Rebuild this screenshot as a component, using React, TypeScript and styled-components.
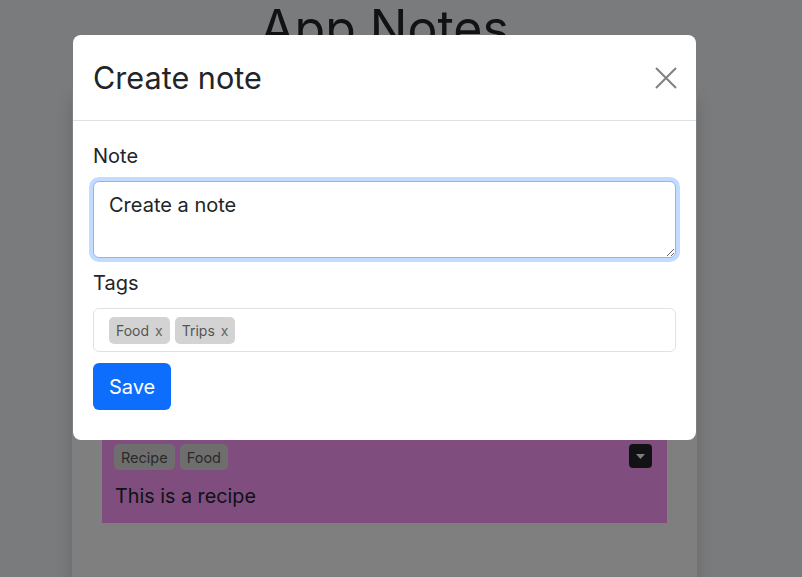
import React from "react";
import styled, { createGlobalStyle } from "styled-components";

const GlobalStyle = createGlobalStyle`
  html, body {
    margin: 0;
    padding: 0;
    background: #f4f6fa;
    font-family: Inter, "Noto Sans", sans-serif;
    color: #212529;
    overflow: hidden;
  }
  * { box-sizing: border-box; }
`;

const Page = styled.div`
  width: 802px;
  height: 577px;
  position: relative;
  overflow: hidden;
`;

const Main = styled.main`
  width: 625px;
  margin-left: 72px;
  display: flex;
  flex-direction: column;
  align-items: stretch;
`;

const AppTitle = styled.h1`
  margin: -2px 0 32px;
  font-size: 50px;
  line-height: 60px;
  font-weight: 400;
  text-align: center;
  color: #212529;
`;

const Panel = styled.section`
  background: #ffffff;
  box-shadow: 0 8px 16px rgba(0, 0, 0, 0.15);
  padding: 342px 30px 60px;
  min-height: 500px;
`;

const NoteCard = styled.article<{ $color: string }>`
  background: ${(p) => p.$color};
  padding: 12px 15px 12px 12px;
`;

const CardTop = styled.div`
  display: flex;
  justify-content: space-between;
  align-items: flex-start;
`;

const TagList = styled.div`
  display: flex;
  gap: 5px;
`;

const CardTag = styled.span`
  display: inline-flex;
  align-items: center;
  height: 26px;
  padding: 0 7px;
  border-radius: 5px;
  background: #dcdcdc;
  color: #555555;
  font-size: 14.5px;
`;

const ToggleButton = styled.button`
  width: 23px;
  height: 24px;
  padding: 0;
  border: none;
  border-radius: 4px;
  background: #212529;
  display: flex;
  align-items: center;
  justify-content: center;
  cursor: pointer;
`;

const NoteText = styled.p`
  margin: 11px 0 0 1px;
  font-size: 19.75px;
  line-height: 30px;
  color: #212529;
`;

const Backdrop = styled.div`
  position: absolute;
  inset: 0;
  background: rgba(0, 0, 0, 0.5);
`;

const Dialog = styled.div`
  position: absolute;
  top: 35px;
  left: 73px;
  width: 623px;
  background: #ffffff;
  border-radius: 8px;
  overflow: hidden;
`;

const DialogHeader = styled.header`
  height: 86px;
  padding: 0 18px 0 20px;
  border-bottom: 1px solid #dee2e6;
  display: flex;
  align-items: center;
  justify-content: space-between;
`;

const DialogTitle = styled.h2`
  margin: 0;
  font-size: 30.6px;
  font-weight: 400;
  line-height: 1.5;
  color: #212529;
`;

const CloseButton = styled.button`
  width: 24px;
  height: 24px;
  padding: 0;
  border: none;
  background: transparent;
  display: flex;
  align-items: center;
  justify-content: center;
  cursor: pointer;
`;

const DialogBody = styled.form`
  padding: 20px 20px 30px;
  display: flex;
  flex-direction: column;
  align-items: flex-start;
`;

const Field = styled.div<{ $gap: number }>`
  width: 100%;
  margin-bottom: ${(p) => p.$gap}px;
  display: flex;
  flex-direction: column;
`;

const Label = styled.label`
  font-size: 20px;
  line-height: 30px;
  margin-bottom: 10px;
  color: #212529;
`;

const TextArea = styled.textarea`
  width: 100%;
  height: 77px;
  padding: 8px 15px;
  font-family: Inter, "Noto Sans", sans-serif;
  font-size: 20px;
  line-height: 30px;
  color: #212529;
  border: 1px solid #86b7fe;
  border-radius: 6px;
  box-shadow: 0 0 0 4px rgba(13, 110, 253, 0.25);
  outline: none;
  resize: vertical;
`;

const TagBox = styled.div`
  width: 100%;
  height: 44px;
  padding: 0 15px;
  border: 1px solid #dee2e6;
  border-radius: 6px;
  display: flex;
  align-items: center;
  gap: 5px;
`;

const Chip = styled.span`
  display: inline-flex;
  align-items: center;
  gap: 6px;
  height: 27px;
  padding: 0 7px;
  border-radius: 5px;
  background: #d3d3d3;
  color: #555555;
  font-size: 14px;
`;

const ChipRemove = styled.span`
  font-size: 14px;
  color: #666666;
  cursor: pointer;
`;

const SaveButton = styled.button`
  height: 47px;
  padding: 0 16px;
  border: none;
  border-radius: 6px;
  background: #0d6efd;
  color: #ffffff;
  font-family: Inter, "Noto Sans", sans-serif;
  font-size: 20px;
  cursor: pointer;
`;

const Caret = () => (
  <svg width="9" height="5" viewBox="0 0 9 5" aria-hidden="true">
    <path d="M0 0 L9 0 L4.5 5 Z" fill="#ffffff" />
  </svg>
);

const CloseIcon = () => (
  <svg width="22" height="22" viewBox="0 0 22 22" aria-hidden="true">
    <path
      d="M1 1 L21 21 M21 1 L1 21"
      stroke="#808080"
      strokeWidth="2"
      fill="none"
    />
  </svg>
);

export default function App() {
  return (
    <Page>
      <GlobalStyle />
      <Main>
        <AppTitle>App Notes</AppTitle>
        <Panel>
          <NoteCard $color="#ff9dff">
            <CardTop>
              <TagList>
                <CardTag>Recipe</CardTag>
                <CardTag>Food</CardTag>
              </TagList>
              <ToggleButton aria-label="Options">
                <Caret />
              </ToggleButton>
            </CardTop>
            <NoteText>This is a recipe</NoteText>
          </NoteCard>
        </Panel>
      </Main>
      <Backdrop />
      <Dialog role="dialog" aria-modal="true">
        <DialogHeader>
          <DialogTitle>Create note</DialogTitle>
          <CloseButton aria-label="Close">
            <CloseIcon />
          </CloseButton>
        </DialogHeader>
        <DialogBody onSubmit={(e) => e.preventDefault()}>
          <Field $gap={10}>
            <Label htmlFor="note">Note</Label>
            <TextArea id="note" defaultValue="Create a note" />
          </Field>
          <Field $gap={11}>
            <Label>Tags</Label>
            <TagBox>
              <Chip>
                Food <ChipRemove>x</ChipRemove>
              </Chip>
              <Chip>
                Trips <ChipRemove>x</ChipRemove>
              </Chip>
            </TagBox>
          </Field>
          <SaveButton type="submit">Save</SaveButton>
        </DialogBody>
      </Dialog>
    </Page>
  );
}
